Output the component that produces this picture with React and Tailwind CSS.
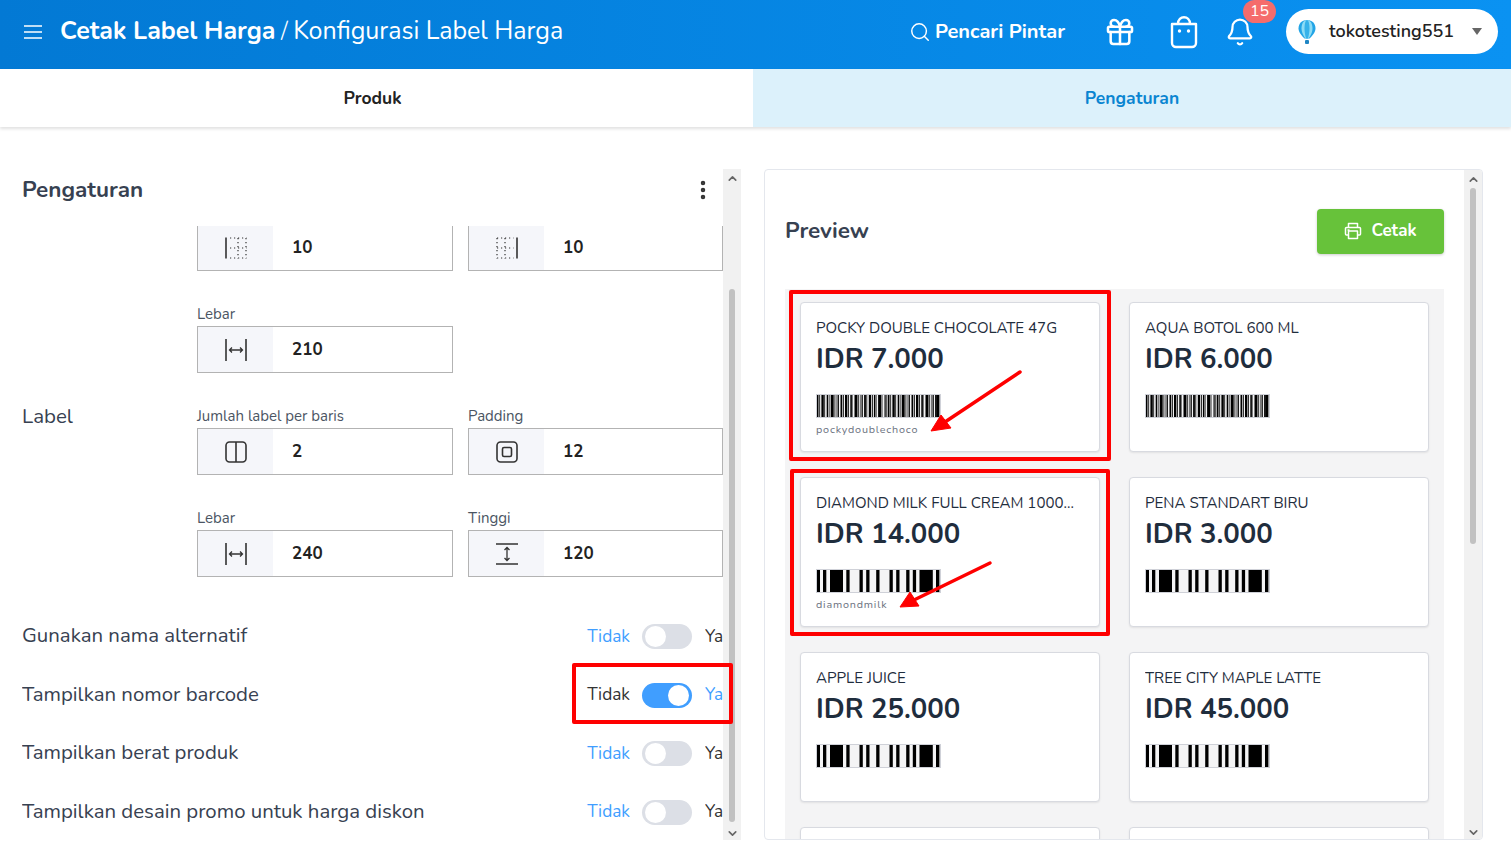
import React from 'react';
import { ChevronUp, ChevronDown, EllipsisVertical, Search, Gift, Bell } from 'lucide-react';

// barcode bars as [x, width] on a 125px wide code
const plainBars = [[0.7,3.3],[7,3.3],[14,13],[30.300,3.300],[43.500,3.300],[50.200,3.300],[60.200,3.300],[73.500,3.300],[80.200,3.300],[90.200,3.300],[96.800,3.300],[103.500,13.300],[120,3.400]];

const denseBars = () => {
  const out = [];
  let x = 0.7, i = 0;
  while (x < 122) {
    const w = [1.800, 0.800, 2.400, 0.800, 1.600, 0.500, 3, 0.800, 0.500, 1.300][i % 10];
    out.push([x, w]);
    x += w + [0.800, 1.300, 0.500, 1.600, 0.800, 1.100][i % 6];
    i++;
  }
  out.push([121, 2.400]);
  return out;
};

const Barcode = ({ dense }) => (
  <svg width="125" height="24" viewBox="0 0 125 24" className="block bg-[#f4f4f5]">
    {(dense ? denseBars() : plainBars).map(([x, w], i) => <rect key={i} x={x} y="0.500" width={w} height="23" fill="#000" />)}
    <rect x="0.500" y="0.500" width="124" height="23" fill="none" stroke="#cfd1d8" />
  </svg>
);

const IconMarginLeft = () => (
  <svg width="24" height="24" viewBox="0 0 24 24" fill="none" stroke="#333">
    <path d="M2 1.500v21" strokeWidth="1.600" />
    <path d="M6 2h16.500M6 12h16.500M6 22h16.500M14 2v20.500M22 2v20.500" strokeWidth="1.200" strokeDasharray="1.200 2.800" />
  </svg>
);
const IconMarginRight = () => (
  <svg width="24" height="24" viewBox="0 0 24 24" fill="none" stroke="#333">
    <path d="M22 1.500v21" strokeWidth="1.600" />
    <path d="M2 2h16.500M2 12h16.500M2 22h16.500M2 2v20.500M10 2v20.500" strokeWidth="1.200" strokeDasharray="1.200 2.800" />
  </svg>
);
const IconWidth = () => (
  <svg width="24" height="24" viewBox="0 0 24 24" fill="none" stroke="#333" strokeWidth="1.600">
    <path d="M2 1v22M22 1v22" />
    <path d="M5.500 12h13M8 9.500 5.500 12 8 14.500M16 9.500l2.500 2.500-2.500 2.500" strokeWidth="1.300" />
  </svg>
);
const IconHeight = () => (
  <svg width="24" height="24" viewBox="0 0 24 24" fill="none" stroke="#333" strokeWidth="1.600">
    <path d="M1 2h22M1 22h22" />
    <path d="M12 5.500v13M9.500 8 12 5.500 14.500 8M9.500 16l2.500 2.500 2.500-2.500" strokeWidth="1.300" />
  </svg>
);
const IconColumns = () => (
  <svg width="24" height="24" viewBox="0 0 24 24" fill="none" stroke="#333" strokeWidth="1.600">
    <rect x="2" y="2" width="20" height="20" rx="3.500" />
    <path d="M12 2v20" />
  </svg>
);
const IconPadding = () => (
  <svg width="24" height="24" viewBox="0 0 24 24" fill="none" stroke="#333" strokeWidth="1.600">
    <rect x="2" y="2" width="20" height="20" rx="3.500" />
    <rect x="7.500" y="7.500" width="9" height="9" rx="1.500" />
  </svg>
);

const Field = ({ label, icon, value }) => (
  <div>
    {label && <div className="h-[22px] text-[15px] leading-[20px] text-[#4b5563]">{label}</div>}
    <div className="flex h-[47px] border border-[#b3b3b3] bg-white">
      <div className="flex w-[75px] items-center justify-center bg-[#f5f6fa]">{icon}</div>
      <div className="flex items-center pl-[19px] text-[17px] font-bold text-[#222]">{value}</div>
    </div>
  </div>
);

const ToggleRow = ({ label, on }) => (
  <div className="flex h-[25px] items-center justify-between">
    <span className="-translate-y-[1px] text-[20.400px] text-[#374151]">{label}</span>
    <div className="flex items-center">
      <span className={`text-[17.300px] ${on ? 'text-[#333]' : 'text-[#409eff]'}`}>Tidak</span>
      <div className={`ml-[12px] mr-[13px] flex h-[25px] w-[50px] items-center rounded-full px-[3px] ${on ? 'justify-end bg-[#409eff]' : 'bg-[#dcdfe6]'}`}>
        <div className="h-[21px] w-[21px] rounded-full bg-white" />
      </div>
      <span className={`w-[18px] overflow-hidden text-[17.300px] ${on ? 'text-[#409eff]' : 'text-[#333]'}`}>Ya</span>
    </div>
  </div>
);

const Scrollbar = ({ thumbTop, thumbHeight }) => (
  <div className="flex w-[18px] shrink-0 flex-col items-center bg-[#f1f1f1]">
    <ChevronUp size={13} strokeWidth={3} className="mt-[3px] text-[#666]" />
    <div className="w-full flex-1 px-[6px]" style={{ paddingTop: thumbTop }}>
      <div className="w-[6px] rounded-full bg-[#c1c1c1]" style={{ height: thumbHeight }} />
    </div>
    <ChevronDown size={13} strokeWidth={3} className="text-[#666]" />
  </div>
);

const LabelCard = ({ name, price, dense, code }) => (
  <div className="h-[150px] rounded-[4px] border border-[#d8dae0] bg-white px-[15px] pt-[15px] shadow-[0_1px_2px_rgba(0,0,0,0.08)]">
    <div className="h-[20px] truncate text-[15.100px] leading-[20px] text-[#1f2d3d]">{name}</div>
    <div className="mt-[3px] h-[36px] text-[27.500px] font-bold leading-[36px] text-[#1f2d3d]">{price}</div>
    <div className="mt-[17px]"><Barcode dense={dense} /></div>
    {code && <div className="mt-[5px] text-[10.800px] leading-[14px] tracking-[0.8px] text-[#6b7280]">{code}</div>}
  </div>
);

export default function App() {
  return (
    <div className='relative h-[856px] w-[1511px] overflow-hidden bg-white font-["Nunito","Noto_Sans","Open_Sans",sans-serif]'>
      {/* Header */}
      <header className="flex h-[69px] items-center bg-gradient-to-r from-[#0379d4] to-[#0a92f2] pb-[6px] pl-[23px] pr-[13px] text-white">
        <svg width="20" height="14" viewBox="0 0 20 14" stroke="white" strokeWidth="1.700">
          <path d="M1 1h18M1 7h18M1 13h18" />
        </svg>
        <div className="ml-[17px] flex items-baseline text-[25px]">
          <span className="font-bold">Cetak Label Harga</span>
          <span className="mx-[5.500px] font-light">/</span>
          <span>Konfigurasi Label Harga</span>
        </div>
        <div className="ml-auto flex items-center">
          <Search size={22} strokeWidth={1.600} />
          <span className="ml-[4px] text-[20px] font-bold">Pencari Pintar</span>
          <Gift size={32} strokeWidth={1.900} className="ml-[39px]" />
          <svg width="30" height="34" viewBox="0 0 30 34" fill="none" stroke="white" strokeWidth="2.400" className="ml-[33px]">
            <path d="M3 9h24v19a4 4 0 0 1-4 4H7a4 4 0 0 1-4-4z" strokeLinejoin="round" />
            <path d="M9 9c0-9 12-9 12 0" />
            <circle cx="10.500" cy="16" r="1.700" fill="white" stroke="none" />
            <circle cx="19.500" cy="16" r="1.700" fill="white" stroke="none" />
          </svg>
          <div className="relative ml-[26px]">
            <Bell size={30} strokeWidth={1.800} />
            <span className="absolute -top-[17px] left-[18px] flex h-[23px] w-[33px] items-center justify-center rounded-full bg-[#f56c6c] text-[16px]">15</span>
          </div>
          <div className="ml-[31px] flex h-[45px] w-[212px] items-center rounded-full bg-white pl-[11px] text-[#222]">
            <svg width="20" height="26" viewBox="0 0 20 26">
              <path d="M10 1C4.500 1 1.500 5 1.500 9.500c0 4 4 8 6 10h5c2-2 6-6 6-10C18.500 5 15.500 1 10 1z" fill="#22a4e6" />
              <path d="M10 1C6.500 1 4.500 5 4.500 9.500c0 4 2.500 8 4 10h3c1.500-2 4-6 4-10C15.500 5 13.500 1 10 1z" fill="#8ddcf5" />
              <path d="M10 1C8.500 1 7.500 5 7.500 9.500c0 4 1 8 1.500 10h2c.5-2 1.500-6 1.500-10C12.500 5 11.500 1 10 1z" fill="#35b2ea" />
              <rect x="8" y="21" width="4" height="4" rx="1" fill="#1f86c4" />
            </svg>
            <span className="ml-[12px] text-[18px] font-semibold">tokotesting551</span>
            <span className="ml-[18px] h-0 w-0 border-x-[5px] border-t-[7px] border-x-transparent border-t-[#666]" />
          </div>
        </div>
      </header>

      {/* Tabs */}
      <div className="relative flex h-[58px] shadow-[0_2px_3px_rgba(0,0,0,0.12)]">
        <div className="flex w-[753px] items-center justify-center text-[17.500px] font-bold text-[#222]">
          <span className="-translate-x-[4px]">Produk</span>
        </div>
        <div className="flex flex-1 items-center justify-center bg-[#dcf1fb] text-[17.500px] font-bold text-[#0a85d1]">Pengaturan</div>
      </div>

      {/* Body */}
      <div className="flex h-[671px] pt-[42px]">
        {/* Settings panel */}
        <section className="ml-[22px] flex h-[671px] w-[719px]">
          <div className="flex w-[701px] flex-col">
            <div className="flex h-[57px] shrink-0 items-center justify-between pb-[15px]">
              <h2 className="text-[22.500px] font-bold text-[#374151]">Pengaturan</h2>
              <EllipsisVertical size={24} strokeWidth={2.500} className="mr-[8px] text-[#333]" />
            </div>
            <div className="flex-1 overflow-hidden">
              <div className="-mt-[2px] ml-[175px] grid grid-cols-[256px_255px] gap-x-[15px]">
                <Field icon={<IconMarginLeft />} value="10" />
                <Field icon={<IconMarginRight />} value="10" />
                <div className="col-span-2 mt-[33px] w-[256px]"><Field label="Lebar" icon={<IconWidth />} value="210" /></div>
              </div>
              <div className="mt-[33px] flex">
                <div className="w-[175px] text-[20.500px] leading-[20px] text-[#374151]">Label</div>
                <div className="grid grid-cols-[256px_255px] gap-x-[15px] gap-y-[33px]">
                  <Field label="Jumlah label per baris" icon={<IconColumns />} value="2" />
                  <Field label="Padding" icon={<IconPadding />} value="12" />
                  <Field label="Lebar" icon={<IconWidth />} value="240" />
                  <Field label="Tinggi" icon={<IconHeight />} value="120" />
                </div>
              </div>
              <div className="mt-[47px] flex flex-col gap-y-[33.500px]">
                <ToggleRow label="Gunakan nama alternatif" />
                <ToggleRow label="Tampilkan nomor barcode" on />
                <ToggleRow label="Tampilkan berat produk" />
                <ToggleRow label="Tampilkan desain promo untuk harga diskon" />
              </div>
            </div>
          </div>
          <Scrollbar thumbTop={104} thumbHeight={533} />
        </section>

        {/* Preview panel */}
        <section className="ml-[23px] flex h-[671px] w-[719px] overflow-hidden rounded-[4px] border border-[#e4e7ed]">
          <div className="flex-1 overflow-hidden pl-[20px] pr-[20px]">
            <div className="flex h-[119px] items-center justify-between pt-[3px]">
              <h2 className="text-[22.500px] font-bold text-[#374151]">Preview</h2>
              <button className="flex h-[45px] w-[127px] items-center justify-center gap-[9px] rounded-[4px] bg-[#67c23a] text-[17px] font-bold text-white shadow-[0_1px_3px_rgba(0,0,0,0.2)]">
                <svg width="18" height="18" viewBox="0 0 18 18" fill="none" stroke="white" strokeWidth="1.500" strokeLinejoin="round">
                  <path d="M4.500 5.500V1.500h9v4" />
                  <path d="M4.500 13H2.500a1 1 0 0 1-1-1V6.500a1 1 0 0 1 1-1h13a1 1 0 0 1 1 1V12a1 1 0 0 1-1 1h-2" />
                  <path d="M4.500 9h9v7.500h-9zM3.500 8h2" />
                </svg>
                Cetak
              </button>
            </div>
            <div className="grid grid-cols-[300px_300px] gap-x-[29px] gap-y-[25px] bg-[#f4f4f5] px-[15px] pt-[13px]">
              <LabelCard name="POCKY DOUBLE CHOCOLATE 47G" price="IDR 7.000" dense code="pockydoublechoco" />
              <LabelCard name="AQUA BOTOL 600 ML" price="IDR 6.000" dense />
              <LabelCard name="DIAMOND MILK FULL CREAM 1000..." price="IDR 14.000" code="diamondmilk" />
              <LabelCard name="PENA STANDART BIRU" price="IDR 3.000" />
              <LabelCard name="APPLE JUICE" price="IDR 25.000" />
              <LabelCard name="TREE CITY MAPLE LATTE" price="IDR 45.000" />
              <LabelCard name="" price="" />
              <LabelCard name="" price="" />
            </div>
          </div>
          <Scrollbar thumbTop={2} thumbHeight={356} />
        </section>
      </div>

      {/* Red annotations drawn over the screenshot */}
      <div className="absolute left-[789px] top-[290px] h-[171px] w-[322px] rounded-[2px] border-[4px] border-[#fe0000]" />
      <div className="absolute left-[790px] top-[469px] h-[167px] w-[320px] rounded-[2px] border-[4px] border-[#fe0000]" />
      <div className="absolute left-[572px] top-[663px] h-[61px] w-[161px] rounded-[2px] border-[4px] border-[#fe0000]" />
      <svg className="absolute left-0 top-0" width="1511" height="856" fill="#fe0000" stroke="#fe0000">
        <path d="M1020 372 945 422" strokeWidth="3.500" strokeLinecap="round" />
        <path d="M931 431 941 415 951 428z" strokeWidth="1" />
        <path d="M990 563 914 600" strokeWidth="3.500" strokeLinecap="round" />
        <path d="M900 607 910 592 919 606z" strokeWidth="1" />
      </svg>
    </div>
  );
}
